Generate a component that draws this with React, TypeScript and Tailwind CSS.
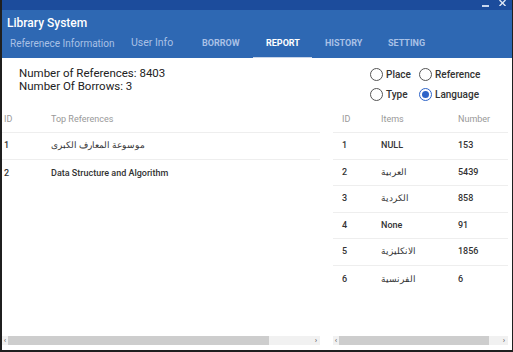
const refs = [
  { id: 1, title: "موسوعة المعارف الكبرى" },
  { id: 2, title: "Data Structure and Algorithm" },
];

const items = [
  { id: 1, name: "NULL", count: 153 },
  { id: 2, name: "العربية", count: 5439 },
  { id: 3, name: "الكردية", count: 858 },
  { id: 4, name: "None", count: 91 },
  { id: 5, name: "الانكليزية", count: 1856 },
  { id: 6, name: "الفرنسية", count: 6 },
];

function Radio({ label, checked }: { label: string; checked?: boolean }) {
  return (
    <div className="flex items-center gap-[3px]">
      <span
        className={`w-[13px] h-[13px] rounded-full border-[1.5px] flex items-center justify-center ${
          checked ? "border-[#2e64c8]" : "border-[#555]"
        }`}
      >
        {checked && <span className="w-[7px] h-[7px] rounded-full bg-[#2e64c8]" />}
      </span>
      <span className="text-[10px] font-medium text-[#333]">{label}</span>
    </div>
  );
}

function Scrollbar({ thumb }: { thumb: string }) {
  return (
    <div className="h-[9px] bg-[#f1f1f1] flex items-center">
      <span className="w-[6px] text-[8px] leading-none text-[#555] text-center">‹</span>
      <div className={`h-full bg-[#cdcdcd] ${thumb}`} />
      <div className="flex-1" />
      <span className="w-[8px] text-[8px] leading-none text-[#555] text-center">›</span>
    </div>
  );
}

const tab = "shrink-0 whitespace-nowrap";

export default function App() {
  return (
    <div
      className="w-[513px] h-[352px] bg-[#1f1f1f] p-[2px] pt-0 pr-[1px] overflow-hidden"
      style={{ fontFamily: "Roboto, 'Noto Sans', sans-serif" }}
    >
      <div className="h-full flex flex-col bg-white">
        <div className="bg-[#2e68b3] h-[58px] flex flex-col">
          <div className="h-[10px] bg-[#1c4c9c] flex justify-end items-start gap-[10px] pr-[6px]">
            <span className="w-[7px] h-[2px] bg-[#c8d6ee] mt-[5px]" />
            <svg width="7" height="6" viewBox="0 0 7 6">
              <path d="M0.5 0 L6.5 6 M6.5 0 L0.5 6" stroke="#dde6f5" strokeWidth="1.4" />
            </svg>
          </div>
          <div className="text-white text-[12px] font-medium pl-[5px] pt-[4px] h-[23px]">
            Library System
          </div>
          <div className="flex items-end h-[25px] relative">
            <span className={`${tab} text-[10px] text-[#a9c1e6] pl-[8px] w-[129px] pb-[7px]`}>
              Referenece Information
            </span>
            <span className={`${tab} text-[10.5px] text-[#a9c1e6] w-[71px] pb-[7px]`}>User Info</span>
            <span className={`${tab} text-[9px] font-bold text-[#a9c1e6] w-[64px] pb-[8px]`}>BORROW</span>
            <span className={`${tab} text-[9px] font-bold text-white w-[59px] pb-[8px] relative`}>
              REPORT
              <span className="absolute left-[-13px] right-[13px] bottom-0 h-[1px] bg-[#c7d4e8]" />
            </span>
            <span className={`${tab} text-[9px] font-bold text-[#a9c1e6] w-[63px] pb-[8px]`}>HISTORY</span>
            <span className={`${tab} text-[9px] font-bold text-[#a9c1e6] pb-[8px]`}>SETTING</span>
          </div>
        </div>

        <div className="h-[50px] flex">
          <div className="flex-1 pl-[17px] pt-[9px] text-[11.5px] leading-[13px] text-[#222]">
            <div>Number of References: 8403</div>
            <div>Number Of Borrows: 3</div>
          </div>
          <div className="w-[142px] grid grid-cols-[49px_1fr] gap-y-[5px] content-start pt-[9px]">
            <Radio label="Place" />
            <Radio label="Reference" />
            <Radio label="Type" />
            <Radio label="Language" checked />
          </div>
        </div>

        <div className="flex-1 flex gap-[13px]">
          <div className="flex-1 flex flex-col">
            <div className="flex-1 text-[9px]">
              <div className="flex h-[25px] items-center border-b border-[#eee] text-[#999]">
                <span className="w-[49px] pl-[2px]">ID</span>
                <span>Top References</span>
              </div>
              {refs.map((r, i) => (
                <div
                  key={r.id}
                  className={`flex h-[27px] items-center font-medium text-[#333] ${
                    i < refs.length - 1 ? "border-b border-[#eee]" : ""
                  }`}
                >
                  <span className="w-[49px] pl-[2px]">{r.id}</span>
                  <span dir="auto" className="text-left">{r.title}</span>
                </div>
              ))}
            </div>
            <Scrollbar thumb="w-[261px]" />
            <div className="h-[5px]" />
          </div>

          <div className="w-[179px] flex flex-col pr-[4px]">
            <div className="flex-1 text-[9px]">
              <div className="flex h-[25px] items-center border-b border-[#eee] text-[#999]">
                <span className="w-[48px] pl-[9px]">ID</span>
                <span className="w-[77px]">Items</span>
                <span>Number</span>
              </div>
              {items.map((r, i) => (
                <div
                  key={r.id}
                  className={`flex h-[26.6px] items-center font-medium text-[#333] ${
                    i < items.length - 1 ? "border-b border-[#eee]" : ""
                  }`}
                >
                  <span className="w-[48px] pl-[9px]">{r.id}</span>
                  <span className="w-[77px] text-left" dir="auto">{r.name}</span>
                  <span>{r.count}</span>
                </div>
              ))}
            </div>
            <Scrollbar thumb="w-[150px]" />
            <div className="h-[5px]" />
          </div>
        </div>
      </div>
    </div>
  );
}
